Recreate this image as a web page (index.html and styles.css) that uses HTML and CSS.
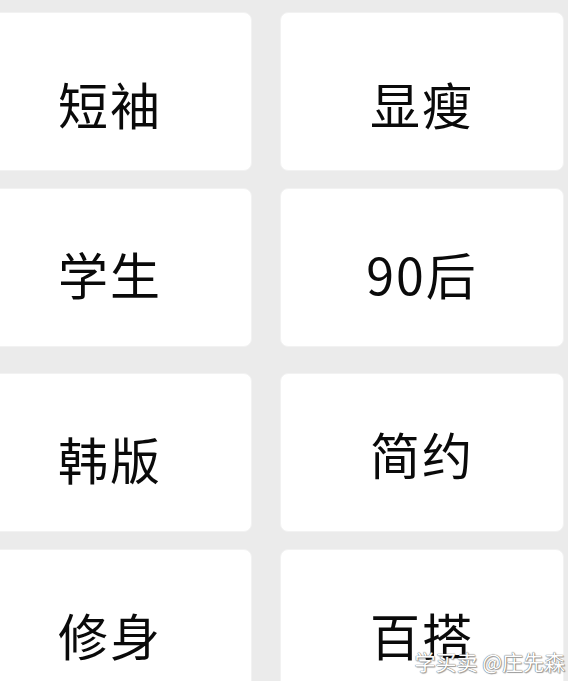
FILE: index.html
```html
<!DOCTYPE html>
<html lang="zh-CN">
<head>
<meta charset="utf-8">
<title>标签</title>
<link rel="stylesheet" href="styles.css">
</head>
<body>
<main class="tags">
  <div class="row">
    <div class="tag tag-low">短袖</div>
    <div class="tag tag-low">显瘦</div>
  </div>
  <div class="row">
    <div class="tag">学生</div>
    <div class="tag">90后</div>
  </div>
  <div class="row row-spaced">
    <div class="tag">韩版</div>
    <div class="tag tag-high">简约</div>
  </div>
  <div class="row">
    <div class="tag">修身</div>
    <div class="tag">百搭</div>
  </div>
</main>
<div class="watermark">学买卖 @庄先森</div>
</body>
</html>
```
FILE: styles.css
```css
html, body {
  margin: 0;
  padding: 0;
  background: #ebebeb;
  overflow: hidden;
  height: 681px;
}

body {
  font-family: "Noto Sans CJK SC", "Noto Sans", sans-serif;
  position: relative;
}

.tags {
  display: flex;
  flex-direction: column;
  gap: 17px;
  padding-top: 12px;
  margin-left: -32px;
}

.row {
  display: grid;
  grid-template-columns: 284px 284px;
  column-gap: 28px;
}

.row-spaced {
  margin-top: 9px;
}

.tag {
  height: 159px;
  box-sizing: border-box;
  padding-top: 10px;
  background: #ffffff;
  border: 1px solid #f2f2f2;
  border-radius: 8px;
  display: flex;
  align-items: center;
  justify-content: center;
  font-size: 50px;
  color: #0a0a0a;
  letter-spacing: 2px;
}

.tag-low {
  padding-top: 22px;
}

.tag-high {
  padding-top: 0;
}

.watermark {
  position: absolute;
  right: 3px;
  bottom: 8px;
  font-size: 21px;
  line-height: 24px;
  color: #ffffff;
  text-shadow:
    0 0 1px #6b6b6b,
    0 0 1px #6b6b6b,
    1px 1px 1px rgba(0, 0, 0, 0.35);
}
```
